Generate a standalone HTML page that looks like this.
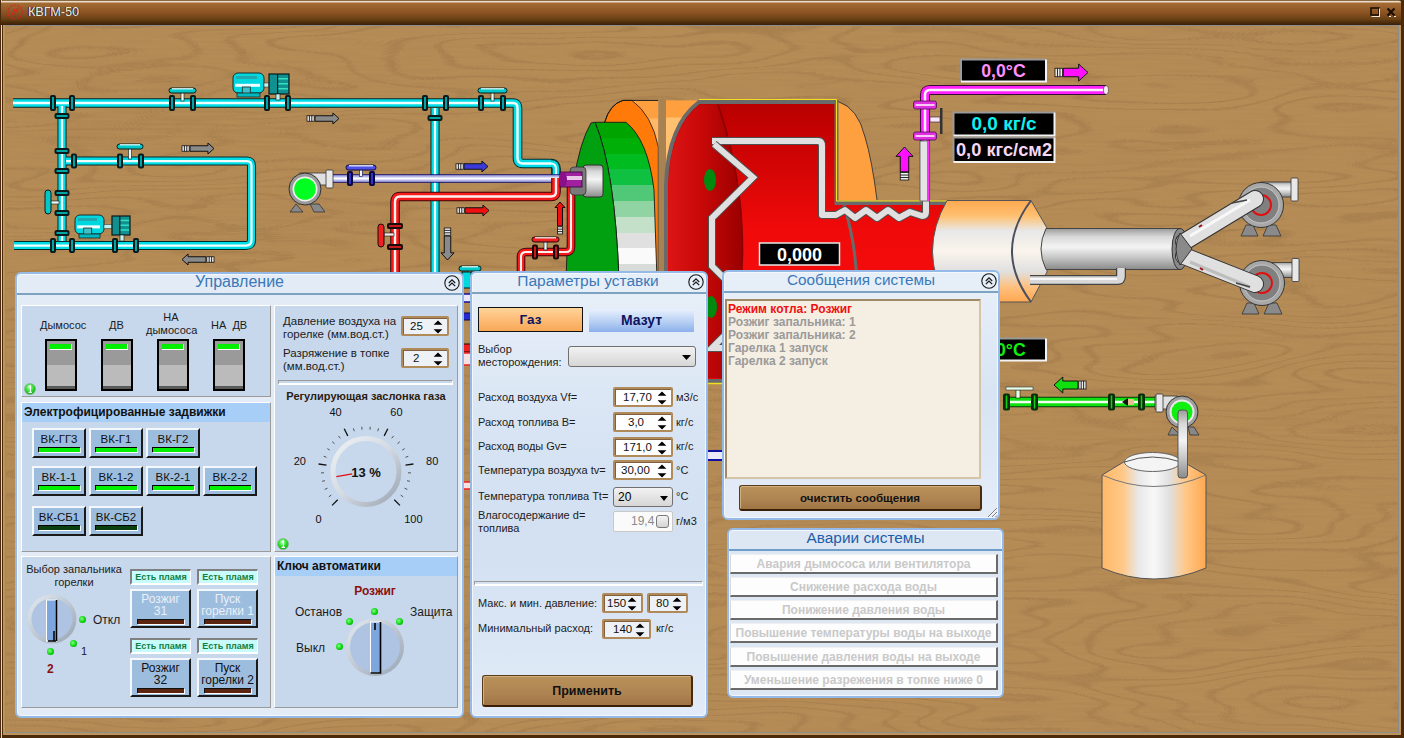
<!DOCTYPE html>
<html><head><meta charset="utf-8">
<style>
*{box-sizing:border-box}
html,body{margin:0;padding:0;width:1404px;height:738px;overflow:hidden;background:#AE8654;font-family:"Liberation Sans",sans-serif}
.a{position:absolute}
#frame{left:0;top:0;width:1404px;height:738px;background:#4A2A0A}
#wood{left:3px;top:25px;width:1398px;height:710px;background:#B48C58}
#content{left:5px;top:25px;width:1394px;height:708px;border:1px solid #8C8C8C;background:#AE8654;overflow:hidden}
#title{left:1px;top:0;width:1400px;height:25px;background:linear-gradient(#8A6A40 0,#8A6A40 1px,#EADCCB 1px,#EADCCB 2px,#A46C34 3px,#8A5222 13px,#6A4216 19px,#4A2A0C 23px,#3A2008 25px);border-radius:3px 3px 0 0}
#title .t{left:27px;top:5px;font-size:12.6px;color:#F4E8C8;text-shadow:-1px 0 #2A1040, 1px 0 #3A6060}
.panel{position:absolute;border:2px solid #96BAE8;border-radius:6px;background:#E3EBF6;box-shadow:inset 0 0 0 1px #F4F8FD}
.ptitle{position:absolute;left:0;right:0;top:1px;text-align:center;font-size:16px;color:#3A78B8;line-height:18px}
.psep{position:absolute;left:1px;right:1px;height:2px;background:#7DA2C2}
.close{position:absolute;width:16px;height:16px}
.sec{position:absolute;background:#C7D7EC;border-top:1px solid #FFFFFF;border-left:1px solid #FFFFFF;border-right:1px solid #9A9A9A;border-bottom:1px solid #9A9A9A}
.hdr{position:absolute;left:0;right:0;top:0;height:19px;background:#A7CEF6;font-weight:bold;font-size:12px;line-height:18px;padding-left:2px;color:#111}
.lbl{position:absolute;font-size:11px;color:#1C1C1C;white-space:nowrap;line-height:13px}
.sw{position:absolute;width:32px;height:52px;background:#000;}
.sw i{position:absolute;left:2px;top:2px;width:28px;height:24px;background:#9A9A9A}
.sw b{position:absolute;left:2px;top:26px;width:28px;height:21px;background:#BBBBBB}
.sw u{position:absolute;left:2px;top:47px;width:28px;height:3px;background:#5A5A5A}
.sw s{position:absolute;left:5px;top:5px;width:21px;height:5px;background:#00F000;border-right:1px solid #fff;border-bottom:1px solid #fff;box-sizing:content-box}
.btn{position:absolute;width:54px;height:30px;background:#9DBDDF;border-top:2px solid #F4F8FC;border-left:2px solid #F4F8FC;border-right:2px solid #1A1A1A;border-bottom:2px solid #1A1A1A;font-size:11.5px;text-align:center;line-height:14px;color:#111;padding-top:2px}
.btn s{position:absolute;left:4px;top:17px;width:41px;height:4px;background:#00F000;border-top:1px solid #000;border-left:1px solid #000;box-shadow:1px 1px 0 #fff;box-sizing:content-box}
.flame{position:absolute;width:61px;height:16px;background:#C8FCFC;border-top:2px solid #808080;border-left:2px solid #808080;border-right:1px solid #fff;border-bottom:2px solid #fff;font-size:9px;font-weight:bold;color:#108040;text-align:center;line-height:12px}
.btn2{position:absolute;width:61px;height:39px;background:#9DBDDF;border-top:2px solid #F4F8FC;border-left:2px solid #F4F8FC;border-right:2px solid #1A1A1A;border-bottom:2px solid #1A1A1A;font-size:12px;text-align:center;line-height:12px;color:#111;padding-top:2px}
.btn2 s{position:absolute;left:5px;top:28px;width:46px;height:4px;background:#5A2410;border-top:1px solid #111;border-left:1px solid #111;box-shadow:1px 1px 0 #fff;box-sizing:content-box}
.spin{position:absolute;height:20px;background:#EEF2F6;border:2px solid #B08A58;border-radius:2px;box-shadow:inset 1px 1px 0 #806040;font-size:11.5px;color:#111;line-height:16px}
.spin svg{transform:scale(1.1)}
.spin .v{position:absolute;top:0}
.spin svg{position:absolute;right:4px;top:2px}
.dd{position:absolute;border:1px solid #707070;border-radius:3px;background:linear-gradient(#F2F2F2,#E4E4E4 50%,#D6D6D6)}
.brown{position:absolute;background:linear-gradient(#B89058,#AE8552 60%,#A07444);border:1px solid #5A3C18;border-bottom:2px solid #3A1E06;border-right:2px solid #4A2A0A;border-radius:3px;box-shadow:inset 1px 1px 0 #D0B080;font-weight:bold;font-size:12px;text-align:center;color:#111}
.msg{position:absolute;font-size:12px;font-weight:bold;line-height:13px;white-space:nowrap}
.alarm{position:absolute;left:730px;width:268px;height:20px;background:#FDFDFD;border-right:2px solid #6A6A6A;border-bottom:2px solid #6A6A6A;border-top:1px solid #F0F0F0;border-left:1px solid #D8D8D8;font-size:12px;font-weight:bold;color:#C9C9C9;text-align:center;line-height:18px;white-space:nowrap}
.dot{position:absolute;width:7px;height:7px;border-radius:50%;background:radial-gradient(circle at 40% 40%,#80FF80,#00D000 60%,#008800)}
</style></head><body>
<div id="frame" class="a"></div>
<div id="wood" class="a"></div><div class="a" style="left:1px;top:0;width:1px;height:738px;background:#E6D6C0"></div><div class="a" style="left:3px;top:25px;width:2px;height:708px;background:#BC945C"></div><div class="a" style="left:1399px;top:25px;width:2px;height:710px;background:#BC945C"></div><div class="a" style="left:3px;top:733px;width:1398px;height:2px;background:#BC945C"></div>
<div id="content" class="a"><svg width="1394" height="708" style="position:absolute;left:0;top:0"><defs><filter id="woodf" x="0" y="0" width="100%" height="100%" color-interpolation-filters="sRGB"><feTurbulence type="fractalNoise" baseFrequency="0.0022 0.014" numOctaves="3" seed="11" result="t"/><feComponentTransfer in="t" result="rings"><feFuncR type="table" tableValues="1 0 0 0 0 0 1 0 0 0 0 0 1 0 0 0 0 0 1 0 0 0 0 0 1 0 0 0 0 0 1 0 0 0 0 0 1 0 0 0 0 0 1 0 0 0 0 0 1 0 0 0 0 0 1 0 0 0 0 0 1 0 0 0 0 0 1 0 0 0 0 0 1"/></feComponentTransfer><feTurbulence type="fractalNoise" baseFrequency="0.02 0.4" numOctaves="1" seed="3" result="fine"/><feComposite in="rings" in2="fine" operator="arithmetic" k1="0" k2="0.6" k3="0.4" k4="0" result="mix"/><feColorMatrix in="mix" type="matrix" values="-0.075 0 0 0 0.72  -0.065 0 0 0 0.556  -0.042 0 0 0 0.342  0 0 0 0 1"/></filter></defs><rect width="1394" height="708" filter="url(#woodf)"/></svg></div>
<div id="title" class="a">
  <svg class="a" style="left:5px;top:3px" width="18" height="18" viewBox="0 0 18 18"><circle cx="9" cy="9" r="7" fill="none" stroke="#E02020" stroke-width="1.2" stroke-dasharray="2 1.5"/><path d="M6 12 L9 6 M9 11 L12 5" stroke="#E02020" stroke-width="1.2"/></svg>
  <div class="a t">КВГМ-50</div>
  <svg class="a" style="left:1369px;top:7px" width="11" height="10"><rect x="1" y="1" width="8" height="7" fill="none" stroke="#1A0E04" stroke-width="1.6"/><path d="M1.5 9.5 H10 M9.5 1.5 V9.5" stroke="#F0E8D8" stroke-width="1"/></svg>
  <svg class="a" style="left:1385px;top:7px" width="11" height="10"><path d="M1.5 1.5 L8.5 8.5 M8.5 1.5 L1.5 8.5" stroke="#1A0E04" stroke-width="2.2"/><path d="M3 9.5 L5 9.5 M8 9.5 L10 9.5" stroke="#F0E8D8" stroke-width="1"/></svg>
</div>

<!-- DIAGRAM -->
<svg id="diag" class="a" style="left:0;top:0" width="1404" height="738" viewBox="0 0 1404 738">
<path d="M13 103 H513 Q517.5 103 517.5 108 V158 Q517.5 163.5 523 163.5 H551 Q556 163.5 556 169 V176" fill="none" stroke="#062a2a" stroke-width="9.6" stroke-linejoin="round"/>
<path d="M13 103 H513 Q517.5 103 517.5 108 V158 Q517.5 163.5 523 163.5 H551 Q556 163.5 556 169 V176" fill="none" stroke="#00DDE6" stroke-width="7.6" stroke-linejoin="round"/>
<path d="M13 103 H513 Q517.5 103 517.5 108 V158 Q517.5 163.5 523 163.5 H551 Q556 163.5 556 169 V176" fill="none" stroke="#F2FFFF" stroke-width="2.4" stroke-linejoin="round"/>
<path d="M62 106 V246" fill="none" stroke="#062a2a" stroke-width="9.1" stroke-linejoin="round"/>
<path d="M62 106 V246" fill="none" stroke="#00DDE6" stroke-width="7.1" stroke-linejoin="round"/>
<path d="M62 106 V246" fill="none" stroke="#F2FFFF" stroke-width="2.25" stroke-linejoin="round"/>
<path d="M66 161 H247 Q251.5 161 251.5 166 V240 Q251.5 245.5 246 245.5 H14" fill="none" stroke="#062a2a" stroke-width="9.1" stroke-linejoin="round"/>
<path d="M66 161 H247 Q251.5 161 251.5 166 V240 Q251.5 245.5 246 245.5 H14" fill="none" stroke="#00DDE6" stroke-width="7.1" stroke-linejoin="round"/>
<path d="M66 161 H247 Q251.5 161 251.5 166 V240 Q251.5 245.5 246 245.5 H14" fill="none" stroke="#F2FFFF" stroke-width="2.25" stroke-linejoin="round"/>
<path d="M435 108 V272" fill="none" stroke="#062a2a" stroke-width="9.1" stroke-linejoin="round"/>
<path d="M435 108 V272" fill="none" stroke="#00DDE6" stroke-width="7.1" stroke-linejoin="round"/>
<path d="M435 108 V272" fill="none" stroke="#F2FFFF" stroke-width="2.25" stroke-linejoin="round"/>
<rect x="50" y="95.0" width="6" height="16" rx="2" fill="#0A1A1A"/>
<rect x="52.2" y="97.0" width="1.6" height="12" fill="#00C8C8"/>
<rect x="69" y="95.0" width="6" height="16" rx="2" fill="#0A1A1A"/>
<rect x="71.2" y="97.0" width="1.6" height="12" fill="#00C8C8"/>
<rect x="169" y="95.0" width="6" height="16" rx="2" fill="#0A1A1A"/>
<rect x="171.2" y="97.0" width="1.6" height="12" fill="#00C8C8"/>
<rect x="190" y="95.0" width="6" height="16" rx="2" fill="#0A1A1A"/>
<rect x="192.2" y="97.0" width="1.6" height="12" fill="#00C8C8"/>
<rect x="264" y="95.0" width="6" height="16" rx="2" fill="#0A1A1A"/>
<rect x="266.2" y="97.0" width="1.6" height="12" fill="#00C8C8"/>
<rect x="285" y="95.0" width="6" height="16" rx="2" fill="#0A1A1A"/>
<rect x="287.2" y="97.0" width="1.6" height="12" fill="#00C8C8"/>
<rect x="422" y="95.0" width="6" height="16" rx="2" fill="#0A1A1A"/>
<rect x="424.2" y="97.0" width="1.6" height="12" fill="#00C8C8"/>
<rect x="443" y="95.0" width="6" height="16" rx="2" fill="#0A1A1A"/>
<rect x="445.2" y="97.0" width="1.6" height="12" fill="#00C8C8"/>
<rect x="478" y="95.0" width="6" height="16" rx="2" fill="#0A1A1A"/>
<rect x="480.2" y="97.0" width="1.6" height="12" fill="#00C8C8"/>
<rect x="500" y="95.0" width="6" height="16" rx="2" fill="#0A1A1A"/>
<rect x="502.2" y="97.0" width="1.6" height="12" fill="#00C8C8"/>
<rect x="181.0" y="91" width="3" height="10" fill="#E8F8F8" stroke="#0A1A1A" stroke-width="0.6"/>
<rect x="169" y="88" width="27" height="5" rx="2.5" fill="#00C8C8" stroke="#0A1A1A" stroke-width="1"/>
<rect x="172" y="88" width="21" height="1.5" fill="#F0FFFF" opacity="0.8"/>
<rect x="491.0" y="91" width="3" height="10" fill="#E8F8F8" stroke="#0A1A1A" stroke-width="0.6"/>
<rect x="478" y="88" width="29" height="5" rx="2.5" fill="#00C8C8" stroke="#0A1A1A" stroke-width="1"/>
<rect x="481" y="88" width="23" height="1.5" fill="#F0FFFF" opacity="0.8"/>
<rect x="54.5" y="113" width="15" height="6" rx="2" fill="#0A1A1A"/>
<rect x="56.5" y="115.2" width="11" height="1.6" fill="#00C8C8"/>
<rect x="427.5" y="115" width="15" height="6" rx="2" fill="#0A1A1A"/>
<rect x="429.5" y="117.2" width="11" height="1.6" fill="#00C8C8"/>
<rect x="54.5" y="148" width="15" height="6" rx="2" fill="#0A1A1A"/>
<rect x="56.5" y="150.2" width="11" height="1.6" fill="#00C8C8"/>
<rect x="54.5" y="168" width="15" height="6" rx="2" fill="#0A1A1A"/>
<rect x="56.5" y="170.2" width="11" height="1.6" fill="#00C8C8"/>
<rect x="54.5" y="190" width="15" height="6" rx="2" fill="#0A1A1A"/>
<rect x="56.5" y="192.2" width="11" height="1.6" fill="#00C8C8"/>
<rect x="54.5" y="210" width="15" height="6" rx="2" fill="#0A1A1A"/>
<rect x="56.5" y="212.2" width="11" height="1.6" fill="#00C8C8"/>
<rect x="54.5" y="230" width="15" height="6" rx="2" fill="#0A1A1A"/>
<rect x="56.5" y="232.2" width="11" height="1.6" fill="#00C8C8"/>
<rect x="47" y="201" width="12" height="3" fill="#E8F8F8" stroke="#0a1a1a" stroke-width="0.6"/>
<rect x="45" y="190" width="6" height="24" rx="3" fill="#00C8C8" stroke="#0a1a1a" stroke-width="1"/>
<rect x="71" y="153.5" width="6" height="15" rx="2" fill="#0A1A1A"/>
<rect x="73.2" y="155.5" width="1.6" height="11" fill="#00C8C8"/>
<rect x="117" y="153.5" width="6" height="15" rx="2" fill="#0A1A1A"/>
<rect x="119.2" y="155.5" width="1.6" height="11" fill="#00C8C8"/>
<rect x="138" y="153.5" width="6" height="15" rx="2" fill="#0A1A1A"/>
<rect x="140.2" y="155.5" width="1.6" height="11" fill="#00C8C8"/>
<rect x="128.5" y="147" width="3" height="12" fill="#E8F8F8" stroke="#0A1A1A" stroke-width="0.6"/>
<rect x="117" y="144" width="26" height="5" rx="2.5" fill="#00C8C8" stroke="#0A1A1A" stroke-width="1"/>
<rect x="120" y="144" width="20" height="1.5" fill="#F0FFFF" opacity="0.8"/>
<rect x="50" y="238.0" width="6" height="15" rx="2" fill="#0A1A1A"/>
<rect x="52.2" y="240.0" width="1.6" height="11" fill="#00C8C8"/>
<rect x="69" y="238.0" width="6" height="15" rx="2" fill="#0A1A1A"/>
<rect x="71.2" y="240.0" width="1.6" height="11" fill="#00C8C8"/>
<rect x="112" y="238.0" width="6" height="15" rx="2" fill="#0A1A1A"/>
<rect x="114.2" y="240.0" width="1.6" height="11" fill="#00C8C8"/>
<rect x="133" y="238.0" width="6" height="15" rx="2" fill="#0A1A1A"/>
<rect x="135.2" y="240.0" width="1.6" height="11" fill="#00C8C8"/>
<rect x="233" y="73" width="31" height="20" rx="5" fill="#00D8E0" stroke="#1a2a2a" stroke-width="1"/>
<rect x="235" y="83.8" width="25" height="3" fill="#F0FFFF"/>
<rect x="236" y="76" width="21" height="3" fill="#20A8B0"/>
<rect x="242.3" y="87" width="8" height="9" fill="#40C0C8" stroke="#1a2a2a" stroke-width="0.8"/>
<rect x="237" y="93" width="23" height="4" fill="#00B8C0" stroke="#1a2a2a" stroke-width="0.8"/>
<rect x="264" y="83.0" width="5" height="4" fill="#C0F0F0" stroke="#1a2a2a" stroke-width="0.5"/>
<rect x="269" y="74" width="20" height="20" fill="#109090" stroke="#0a1a1a" stroke-width="1.2"/>
<rect x="278.0" y="78.0" width="10.0" height="1.5" fill="#30E0C0"/>
<rect x="278.0" y="83.0" width="10.0" height="1.5" fill="#30E0C0"/>
<rect x="278.0" y="88.0" width="10.0" height="1.5" fill="#30E0C0"/>
<rect x="277.0" y="74" width="1.2" height="20" fill="#0a1a1a"/>
<rect x="276" y="94" width="4" height="6" fill="#C0F0F0" stroke="#0a1a1a" stroke-width="0.6"/>
<rect x="75" y="215" width="29" height="19" rx="5" fill="#00D8E0" stroke="#1a2a2a" stroke-width="1"/>
<rect x="77" y="225.35" width="23" height="3" fill="#F0FFFF"/>
<rect x="78" y="218" width="19" height="3" fill="#20A8B0"/>
<rect x="83.7" y="228" width="8" height="9" fill="#40C0C8" stroke="#1a2a2a" stroke-width="0.8"/>
<rect x="79" y="234" width="21" height="4" fill="#00B8C0" stroke="#1a2a2a" stroke-width="0.8"/>
<rect x="104" y="224.5" width="8" height="4" fill="#C0F0F0" stroke="#1a2a2a" stroke-width="0.5"/>
<rect x="112" y="216" width="18" height="19" fill="#109090" stroke="#0a1a1a" stroke-width="1.2"/>
<rect x="120.1" y="219.75" width="9.0" height="1.5" fill="#30E0C0"/>
<rect x="120.1" y="224.5" width="9.0" height="1.5" fill="#30E0C0"/>
<rect x="120.1" y="229.25" width="9.0" height="1.5" fill="#30E0C0"/>
<rect x="119.2" y="216" width="1.2" height="19" fill="#0a1a1a"/>
<rect x="120" y="235" width="4" height="6" fill="#C0F0F0" stroke="#0a1a1a" stroke-width="0.6"/>
<rect x="468.5" y="269" width="3" height="5" fill="#E8F8F8" stroke="#0A1A1A" stroke-width="0.6"/>
<rect x="459" y="266" width="22" height="5" rx="2.5" fill="#00C8C8" stroke="#0A1A1A" stroke-width="1"/>
<rect x="462" y="266" width="16" height="1.5" fill="#F0FFFF" opacity="0.8"/>
<path d="M315.0 115.75 H332.95 V113 L339 118.5 L332.95 124 V121.25 H315.0 Z" fill="#8A8A8A" stroke="#111" stroke-width="1"/><rect x="307" y="115.75" width="7.2" height="5.5" fill="#EEE" stroke="#111" stroke-width="0.8"/><path d="M309.4 115.75 V121.25 M311.8 115.75 V121.25" stroke="#111" stroke-width="0.9"/>
<path d="M190.0 145.75 H207.95 V143 L214 148.5 L207.95 154 V151.25 H190.0 Z" fill="#8A8A8A" stroke="#111" stroke-width="1"/><rect x="182" y="145.75" width="7.2" height="5.5" fill="#EEE" stroke="#111" stroke-width="0.8"/><path d="M184.4 145.75 V151.25 M186.8 145.75 V151.25" stroke="#111" stroke-width="0.9"/>
<path d="M206.0 256.75 H188.05 V254 L182 259.5 L188.05 265 V262.25 H206.0 Z" fill="#8A8A8A" stroke="#111" stroke-width="1"/><rect x="206.8" y="256.75" width="7.2" height="5.5" fill="#EEE" stroke="#111" stroke-width="0.8"/><path d="M211.6 256.75 V262.25 M209.2 256.75 V262.25" stroke="#111" stroke-width="0.9"/>
<path d="M444.25 236.0 V252.85 H441 L447.5 260 L454 252.85 H450.75 V236.0 Z" fill="#8A8A8A" stroke="#111" stroke-width="1"/><rect x="444.25" y="228" width="6.5" height="7.2" fill="#EEE" stroke="#111" stroke-width="0.8"/><path d="M444.25 230.4 H450.75 M444.25 232.8 H450.75" stroke="#111" stroke-width="0.9"/>
<path d="M464.0 163.75 H481.95 V161 L488 166.5 L481.95 172 V169.25 H464.0 Z" fill="#3A3ADA" stroke="#111" stroke-width="1"/><rect x="456" y="163.75" width="7.2" height="5.5" fill="#EEE" stroke="#111" stroke-width="0.8"/><path d="M458.4 163.75 V169.25 M460.8 163.75 V169.25" stroke="#111" stroke-width="0.9"/>
<path d="M465.0 207.75 H482.95 V205 L489 210.5 L482.95 216 V213.25 H465.0 Z" fill="#F01010" stroke="#111" stroke-width="1"/><rect x="457" y="207.75" width="7.2" height="5.5" fill="#EEE" stroke="#111" stroke-width="0.8"/><path d="M459.4 207.75 V213.25 M461.8 207.75 V213.25" stroke="#111" stroke-width="0.9"/>
<path d="M557.5 226.0 V207.5 H555 L560.0 202 L565 207.5 H562.5 V226.0 Z" fill="#F01010" stroke="#111" stroke-width="1"/><rect x="557.5" y="226.8" width="5.0" height="7.2" fill="#EEE" stroke="#111" stroke-width="0.8"/><path d="M557.5 231.6 H562.5 M557.5 229.2 H562.5" stroke="#111" stroke-width="0.9"/>
<path d="M1063.25 68.25 H1078.65 V64 L1088 72.5 L1078.65 81 V76.75 H1063.25 Z" fill="#FF10FF" stroke="#111" stroke-width="1"/><rect x="1055" y="68.25" width="7.425" height="8.5" fill="#EEE" stroke="#111" stroke-width="0.8"/><path d="M1057.475 68.25 V76.75 M1059.95 68.25 V76.75" stroke="#111" stroke-width="0.9"/>
<path d="M900.25 171.75 V156.35 H896 L904.5 147 L913 156.35 H908.75 V171.75 Z" fill="#FF10FF" stroke="#111" stroke-width="1"/><rect x="900.25" y="172.575" width="8.5" height="7.425" fill="#EEE" stroke="#111" stroke-width="0.8"/><path d="M900.25 177.525 H908.75 M900.25 175.05 H908.75" stroke="#111" stroke-width="0.9"/>
<path d="M1078.0 381.0 H1062.8 V377 L1054 385.0 L1062.8 393 V389.0 H1078.0 Z" fill="#10E010" stroke="#111" stroke-width="1"/><rect x="1078.8" y="381.0" width="7.2" height="8.0" fill="#EEE" stroke="#111" stroke-width="0.8"/><path d="M1083.6 381.0 V389.0 M1081.2 381.0 V389.0" stroke="#111" stroke-width="0.9"/>
<path d="M632 100.4 H658.3 V150 Q652 115 632 100.4 Z" fill="#FFB868"/>
<rect x="636" y="100.4" width="22" height="18" fill="#FFA040"/>
<path d="M604.6 122.3 Q610 104 623 100.4 H632 Q652 115 658.3 147 V280 H600 Z" fill="#FF7A08" stroke="#1a1a1a" stroke-width="0.8"/>
<path d="M604.6 122.3 Q610 104 623 100.4 H658.3" fill="none" stroke="#1a1a1a" stroke-width="1"/>
<defs><linearGradient id="gside" gradientUnits="userSpaceOnUse" x1="0" y1="122" x2="0" y2="280"><stop offset="0" stop-color="#00A400"/><stop offset="0.1" stop-color="#00A400"/><stop offset="0.1" stop-color="#00B008"/><stop offset="0.2" stop-color="#00B008"/><stop offset="0.2" stop-color="#00BC20"/><stop offset="0.3" stop-color="#00BC20"/><stop offset="0.3" stop-color="#10C040"/><stop offset="0.4" stop-color="#10C040"/><stop offset="0.4" stop-color="#50C878"/><stop offset="0.5" stop-color="#50C878"/><stop offset="0.5" stop-color="#90D4A4"/><stop offset="0.6" stop-color="#90D4A4"/><stop offset="0.6" stop-color="#C4E0C8"/><stop offset="0.7" stop-color="#C4E0C8"/><stop offset="0.7" stop-color="#E0E0E0"/><stop offset="0.8" stop-color="#E0E0E0"/><stop offset="0.8" stop-color="#FAFAFA"/><stop offset="0.9" stop-color="#FAFAFA"/><stop offset="0.9" stop-color="#D8DCD8"/><stop offset="1" stop-color="#D8DCD8"/></linearGradient></defs>
<path d="M595 122.3 H626 Q648 140 654 190 L657 280 H619 Q615 170 595 122.3 Z" fill="url(#gside)" stroke="#1a1a1a" stroke-width="0.9"/>
<path d="M591 123 Q569 160 566 280 H619 Q615 170 595 122.3 Z" fill="#00A010" stroke="#1a1a1a" stroke-width="0.9"/>
<rect x="658.5" y="99" width="7.5" height="181" fill="#A98252"/>
<defs><linearGradient id="ob" x1="0" y1="0" x2="0" y2="1"><stop offset="0" stop-color="#FFA040"/><stop offset="0.18" stop-color="#FFA040"/><stop offset="0.2" stop-color="#FFC070"/><stop offset="1" stop-color="#FFC070"/></linearGradient></defs>
<rect x="666" y="100.4" width="40" height="90" fill="url(#ob)"/>
<path d="M836 101.4 Q858 108 865 137 Q872 160 877 200 H836 Z" fill="#FFA040"/>
<path d="M838 101.4 Q858 108 865 137 Q872 160 877 200" fill="none" stroke="#333" stroke-width="0.9"/>
<defs><linearGradient id="redv" x1="0" y1="0" x2="0" y2="1"><stop offset="0" stop-color="#B80000"/><stop offset="0.2" stop-color="#D00404"/><stop offset="0.45" stop-color="#F00A0A"/><stop offset="1" stop-color="#FF1010"/></linearGradient><linearGradient id="redh" x1="0" y1="0" x2="1" y2="0"><stop offset="0" stop-color="#DC1414"/><stop offset="0.45" stop-color="#C80808"/><stop offset="1" stop-color="#9A0000"/></linearGradient></defs>
<path d="M699 102 H836.5 V203 H947 V383 H699 Q668 362 666 300 V185 Q668 125 699 102 Z" fill="url(#redv)"/>
<path d="M947 203 H836.5 V102 H699 Q668 125 666 185 V300 Q668 362 699 381 H947" fill="none" stroke="#6A6A6A" stroke-width="4"/>
<path d="M701 383.5 H947" fill="none" stroke="#F0E020" stroke-width="1.5"/>
<path d="M699 99.5 H836.5 V201 H947" fill="none" stroke="#F0E020" stroke-width="1"/>
<path d="M700 104.5 Q670 127 668.5 186 V299 Q670 360 700 378.5 H722 Q765 242 718 104.5 Z" fill="url(#redh)"/>
<path d="M718 104.5 Q765 242 722 378.5" fill="none" stroke="#8A0000" stroke-width="1.5"/>
<path d="M844 205 Q870 290 844 378" fill="none" stroke="#6A6A6A" stroke-width="3"/>
<ellipse cx="710" cy="180" rx="6" ry="11" fill="#008A10"/>
<ellipse cx="711" cy="307" rx="6" ry="11" fill="#008A10"/>
<path d="M712 141 H818 Q822 141 822 146 V215 H836 L845 210 L855 218 L866 210 L877 218 L888 210 L899 218 L910 212 L922 216 Q926 216 926 212 V195" fill="none" stroke="#505050" stroke-width="8" stroke-linejoin="round"/>
<path d="M712 141 H818 Q822 141 822 146 V215 H836 L845 210 L855 218 L866 210 L877 218 L888 210 L899 218 L910 212 L922 216 Q926 216 926 212 V195" fill="none" stroke="#E0E0E0" stroke-width="6" stroke-linejoin="round"/>
<path d="M714 144 L753 177.5 L712 218 V266 L753 307 L712 348 H760" fill="none" stroke="#505050" stroke-width="8" stroke-linejoin="miter"/>
<path d="M714 144 L753 177.5 L712 218 V266 L753 307 L712 348 H760" fill="none" stroke="#E0E0E0" stroke-width="6" stroke-linejoin="miter"/>
<rect x="704" y="451" width="22" height="9" fill="#E8E8F8" stroke="#1010A0" stroke-width="2"/>
<rect x="462" y="272" width="9" height="16" fill="#00D8E0" stroke="#0a1a1a" stroke-width="1"/>
<rect x="462" y="294" width="9" height="8" fill="#E8E8F8" stroke="#1010A0" stroke-width="1.5"/>
<rect x="462" y="313" width="9" height="7" fill="#2828D0" stroke="#0a0a40" stroke-width="1"/>
<rect x="462" y="344" width="9" height="8" fill="#F02020" stroke="#1a0a0a" stroke-width="1"/>
<rect x="462" y="353" width="9" height="12" fill="#F8E0E0" stroke="#F02020" stroke-width="1.5"/>
<rect x="462" y="482" width="9" height="7" fill="#F8E0E0" stroke="#F02020" stroke-width="1.5"/>
<rect x="759.5" y="243" width="80" height="22" fill="#000" stroke="#E8E8E8" stroke-width="1.5"/>
<text x="799.5" y="260.5" text-anchor="middle" font-family="Liberation Sans" font-weight="bold" font-size="18" fill="#FFF">0,000</text>
<defs><linearGradient id="cyl" x1="0" y1="0" x2="0" y2="1"><stop offset="0" stop-color="#FFA850"/><stop offset="0.15" stop-color="#FFC070"/><stop offset="0.3" stop-color="#E8E8E8"/><stop offset="0.5" stop-color="#FAF4EC"/><stop offset="0.7" stop-color="#E0E0E0"/><stop offset="0.85" stop-color="#FFC080"/><stop offset="1" stop-color="#FFA850"/></linearGradient></defs>
<path d="M947 200.5 H1031 L1047 228 V272 L1031 302 H947 Q918 251 947 200.5 Z" fill="url(#cyl)" stroke="#555" stroke-width="1"/>
<path d="M1031 200.5 Q993 251 1031 302" fill="none" stroke="#4A5060" stroke-width="2"/>
<defs><linearGradient id="gp" x1="0" y1="0" x2="0" y2="1"><stop offset="0" stop-color="#9A9A9A"/><stop offset="0.2" stop-color="#D8D8D8"/><stop offset="0.45" stop-color="#F4F4F4"/><stop offset="0.7" stop-color="#C8C8C8"/><stop offset="1" stop-color="#8A8A8A"/></linearGradient></defs>
<path d="M1046 228.5 H1180 V269.5 H1046 Q1036 249 1046 228.5 Z" fill="url(#gp)" stroke="#444" stroke-width="1"/>
<path d="M1030 280 H1118 Q1121 280 1121 276 V268" fill="none" stroke="#444" stroke-width="10"/>
<path d="M1030 280 H1118 Q1121 280 1121 276 V268" fill="none" stroke="#D8D8D8" stroke-width="7.5"/>
<path d="M1030 279 H1117" fill="none" stroke="#F8F8F8" stroke-width="2"/>
<ellipse cx="1180" cy="249" rx="8" ry="20.5" fill="#8A8A8A" stroke="#333" stroke-width="1"/>
<rect x="1261" y="182.0" width="34" height="15" fill="url(#gp)" stroke="#333" stroke-width="0.8"/>
<rect x="1291" y="178.0" width="7" height="23" rx="1" fill="#E8E8E8" stroke="#333" stroke-width="0.8"/>
<path d="M1241 236 H1258 L1253 225 H1246 Z M1263 236 H1281 L1276 225 H1268 Z" fill="#8A8A8A" stroke="#333" stroke-width="0.8"/>
<circle cx="1261" cy="205" r="22.5" fill="#A8A8A8" stroke="#333" stroke-width="1"/>
<circle cx="1261" cy="205" r="18" fill="#808080" stroke="#C8C8C8" stroke-width="1"/>
<circle cx="1261" cy="205" r="10" fill="none" stroke="#E01010" stroke-width="2"/>
<rect x="1262" y="262.5" width="34" height="15" fill="url(#gp)" stroke="#333" stroke-width="0.8"/>
<rect x="1292" y="258.5" width="7" height="23" rx="1" fill="#E8E8E8" stroke="#333" stroke-width="0.8"/>
<path d="M1242 314 H1259 L1254 303 H1247 Z M1264 314 H1282 L1277 303 H1269 Z" fill="#8A8A8A" stroke="#333" stroke-width="0.8"/>
<circle cx="1262" cy="283" r="22.5" fill="#A8A8A8" stroke="#333" stroke-width="1"/>
<circle cx="1262" cy="283" r="18" fill="#808080" stroke="#C8C8C8" stroke-width="1"/>
<circle cx="1262" cy="283" r="10" fill="none" stroke="#E01010" stroke-width="2"/>
<path d="M1184 242 L1255 199" fill="none" stroke="#333" stroke-width="18" stroke-linecap="round"/>
<path d="M1184 242 L1255 199" fill="none" stroke="#E0E0E0" stroke-width="16" stroke-linecap="round"/>
<path d="M1184 256 L1255 284" fill="none" stroke="#333" stroke-width="18" stroke-linecap="round"/>
<path d="M1184 256 L1255 284" fill="none" stroke="#E0E0E0" stroke-width="16" stroke-linecap="round"/>
<path d="M1190 236 L1250 200" fill="none" stroke="#F8F8F8" stroke-width="3"/>
<path d="M1190 262 L1250 287" fill="none" stroke="#BEBEBE" stroke-width="3"/>
<path d="M1180 233 Q1172 249 1180 265 L1192 249 Z" fill="#8A8A8A" stroke="#333" stroke-width="1"/>
<path d="M1232 203 L1247 200 M1236 283 L1250 287" stroke="#444" stroke-width="1.5"/>
<path d="M1199 227 l3 -2 M1200 268 l3 2" stroke="#A01010" stroke-width="2"/>
<path d="M332 178.5 H562" fill="none" stroke="#10107A" stroke-width="8.6" stroke-linejoin="round"/>
<path d="M332 178.5 H562" fill="none" stroke="#B8B8E8" stroke-width="6.6" stroke-linejoin="round"/>
<path d="M332 178.5 H562" fill="none" stroke="#FFFFFF" stroke-width="2.1" stroke-linejoin="round"/>
<rect x="347" y="171.0" width="6" height="15" rx="2" fill="#0a0a40"/>
<rect x="349.2" y="173.0" width="1.6" height="11" fill="#4040E0"/>
<rect x="369" y="171.0" width="6" height="15" rx="2" fill="#0a0a40"/>
<rect x="371.2" y="173.0" width="1.6" height="11" fill="#4040E0"/>
<rect x="359.5" y="168" width="3" height="8.5" fill="#E8F8F8" stroke="#0a0a40" stroke-width="0.6"/>
<rect x="346" y="165" width="30" height="5" rx="2.5" fill="#5050E8" stroke="#0a0a40" stroke-width="1"/>
<rect x="349" y="165" width="24" height="1.5" fill="#F0FFFF" opacity="0.8"/>
<path d="M296 204 L290 212 H303 Z M310 204 L314 212 H325 L319 204 Z" fill="#888" stroke="#333" stroke-width="0.8"/>
<rect x="300" y="173" width="28" height="12" fill="#E0E0E0" stroke="#333" stroke-width="0.8"/>
<rect x="326" y="170" width="7" height="18" rx="1" fill="#E8E8E8" stroke="#333" stroke-width="0.8"/>
<circle cx="305" cy="189" r="16" fill="#9A9A9A" stroke="#333" stroke-width="1"/>
<circle cx="305" cy="189" r="12.5" fill="#F0F0F0"/>
<circle cx="305" cy="189" r="10.8" fill="#00FF20"/>
<path d="M556 178 V192 Q556 196.5 551 196.5 H400 Q395 196.5 395 202 V272" fill="none" stroke="#3a0808" stroke-width="9.6" stroke-linejoin="round"/>
<path d="M556 178 V192 Q556 196.5 551 196.5 H400 Q395 196.5 395 202 V272" fill="none" stroke="#F41C1C" stroke-width="7.6" stroke-linejoin="round"/>
<path d="M556 178 V192 Q556 196.5 551 196.5 H400 Q395 196.5 395 202 V272" fill="none" stroke="#FFF0F0" stroke-width="2.4" stroke-linejoin="round"/>
<path d="M571 186 V247 Q571 252 566 252 H526 Q521 252 521 257 V272" fill="none" stroke="#3a0808" stroke-width="8.6" stroke-linejoin="round"/>
<path d="M571 186 V247 Q571 252 566 252 H526 Q521 252 521 257 V272" fill="none" stroke="#F41C1C" stroke-width="6.6" stroke-linejoin="round"/>
<path d="M571 186 V247 Q571 252 566 252 H526 Q521 252 521 257 V272" fill="none" stroke="#FFF0F0" stroke-width="2.1" stroke-linejoin="round"/>
<rect x="387.0" y="223" width="16" height="6" rx="2" fill="#1a0a0a"/>
<rect x="389.0" y="225.2" width="12" height="1.6" fill="#F02020"/>
<rect x="387.0" y="244" width="16" height="6" rx="2" fill="#1a0a0a"/>
<rect x="389.0" y="246.2" width="12" height="1.6" fill="#F02020"/>
<rect x="384" y="233" width="10" height="3" fill="#F8E8E8" stroke="#1a0a0a" stroke-width="0.6"/>
<rect x="378" y="224" width="6" height="23" rx="3" fill="#F02020" stroke="#1a0a0a" stroke-width="1"/>
<rect x="532" y="244.5" width="6" height="15" rx="2" fill="#1a0a0a"/>
<rect x="534.2" y="246.5" width="1.6" height="11" fill="#F02020"/>
<rect x="553" y="244.5" width="6" height="15" rx="2" fill="#1a0a0a"/>
<rect x="555.2" y="246.5" width="1.6" height="11" fill="#F02020"/>
<rect x="544.0" y="240" width="3" height="10" fill="#E8F8F8" stroke="#1a0a0a" stroke-width="0.6"/>
<rect x="532" y="237" width="27" height="5" rx="2.5" fill="#F02020" stroke="#1a0a0a" stroke-width="1"/>
<rect x="535" y="237" width="21" height="1.5" fill="#F0FFFF" opacity="0.8"/>
<path d="M551 163.5 Q556 163.5 556 169 V174" fill="none" stroke="#062a2a" stroke-width="8.6" stroke-linejoin="round"/>
<path d="M551 163.5 Q556 163.5 556 169 V174" fill="none" stroke="#00DDE6" stroke-width="6.6" stroke-linejoin="round"/>
<path d="M551 163.5 Q556 163.5 556 169 V174" fill="none" stroke="#F2FFFF" stroke-width="2.1" stroke-linejoin="round"/>
<rect x="583" y="165" width="20" height="32" rx="3" fill="url(#gp)" stroke="#333" stroke-width="1"/>
<rect x="570" y="167" width="16" height="28" rx="4" fill="#7A7A7A" stroke="#333" stroke-width="0.8"/>
<rect x="560" y="172" width="22" height="15" fill="#A020A0" stroke="#300030" stroke-width="0.8"/>
<rect x="566" y="176" width="16" height="4" fill="#E8C8E8"/>
<ellipse cx="563" cy="179.5" rx="4" ry="7.5" fill="#8A108A"/>
<path d="M925 200 V95 Q925 90 930 90 H1106" fill="none" stroke="#3a083a" stroke-width="10.1" stroke-linejoin="round"/>
<path d="M925 200 V95 Q925 90 930 90 H1106" fill="none" stroke="#FF22FF" stroke-width="8.1" stroke-linejoin="round"/>
<path d="M925 200 V95 Q925 90 930 90 H1106" fill="none" stroke="#FFF0FF" stroke-width="2.55" stroke-linejoin="round"/>
<rect x="920" y="141" width="9" height="60" fill="#E4E4E4" stroke="#555" stroke-width="0.8"/><rect x="927" y="141" width="2.5" height="60" fill="#FF30FF"/>
<ellipse cx="1106" cy="90" rx="2.5" ry="4.3" fill="#F8E8F8" stroke="#333" stroke-width="0.6"/>
<rect x="913.5" y="101" width="23" height="8" rx="2" fill="#E030E0"/>
<rect x="915.5" y="104.2" width="19" height="1.6" fill="#FFF0FF"/>
<rect x="913.5" y="101" width="23" height="8" rx="2" fill="none" stroke="#4a104a" stroke-width="0.8"/>
<rect x="913.5" y="132" width="23" height="8" rx="2" fill="#E030E0"/>
<rect x="915.5" y="135.2" width="19" height="1.6" fill="#FFF0FF"/>
<rect x="913.5" y="132" width="23" height="8" rx="2" fill="none" stroke="#4a104a" stroke-width="0.8"/>
<rect x="930" y="117" width="10" height="5" fill="#F8E8F8" stroke="#3a0a3a" stroke-width="0.6"/>
<rect x="940" y="108" width="2.5" height="26" fill="#333"/>
<rect x="961" y="59.5" width="85" height="22.0" fill="#000"/>
<path d="M961 81.5 V59.5 H1046" fill="none" stroke="#9A9A9A" stroke-width="2"/>
<path d="M961 81.5 H1046 V59.5" fill="none" stroke="#F4F4F4" stroke-width="2"/>
<text x="1003.5" y="76.5" text-anchor="middle" font-family="Liberation Sans" font-weight="bold" font-size="17.7" fill="#FF90FF">0,0°C</text>
<rect x="953.5" y="112.5" width="101.0" height="23.0" fill="#000"/>
<path d="M953.5 135.5 V112.5 H1054.5" fill="none" stroke="#9A9A9A" stroke-width="2"/>
<path d="M953.5 135.5 H1054.5 V112.5" fill="none" stroke="#F4F4F4" stroke-width="2"/>
<text x="1004.0" y="130.0" text-anchor="middle" font-family="Liberation Sans" font-weight="bold" font-size="19" fill="#10F0F0">0,0 кг/с</text>
<rect x="953.5" y="137.5" width="101.0" height="24.5" fill="#000"/>
<path d="M953.5 162 V137.5 H1054.5" fill="none" stroke="#9A9A9A" stroke-width="2"/>
<path d="M953.5 162 H1054.5 V137.5" fill="none" stroke="#F4F4F4" stroke-width="2"/>
<text x="1004.0" y="155.75" text-anchor="middle" font-family="Liberation Sans" font-weight="bold" font-size="18.3" fill="#F4D8F4">0,0 кгс/см2</text>
<rect x="961" y="338.5" width="85" height="22.0" fill="#000"/>
<path d="M961 360.5 V338.5 H1046" fill="none" stroke="#9A9A9A" stroke-width="2"/>
<path d="M961 360.5 H1046 V338.5" fill="none" stroke="#F4F4F4" stroke-width="2"/>
<text x="1003.5" y="355.5" text-anchor="middle" font-family="Liberation Sans" font-weight="bold" font-size="17.7" fill="#10F010">0,0°C</text>
<path d="M1003 402 H1160" fill="none" stroke="#083a08" stroke-width="10.6" stroke-linejoin="round"/>
<path d="M1003 402 H1160" fill="none" stroke="#10E010" stroke-width="8.6" stroke-linejoin="round"/>
<path d="M1003 402 H1160" fill="none" stroke="#F0FFF0" stroke-width="2.6999999999999997" stroke-linejoin="round"/>
<rect x="1003" y="393.5" width="7" height="17" rx="2" fill="#0a2a0a"/>
<rect x="1005.7" y="395.5" width="1.6" height="13" fill="#10D010"/>
<rect x="1031" y="393.5" width="7" height="17" rx="2" fill="#0a2a0a"/>
<rect x="1033.7" y="395.5" width="1.6" height="13" fill="#10D010"/>
<rect x="1108" y="393.5" width="7" height="17" rx="2" fill="#0a2a0a"/>
<rect x="1110.7" y="395.5" width="1.6" height="13" fill="#10D010"/>
<rect x="1138" y="393.5" width="7" height="17" rx="2" fill="#0a2a0a"/>
<rect x="1140.7" y="395.5" width="1.6" height="13" fill="#10D010"/>
<rect x="1016" y="390" width="4" height="8" fill="#E8FFE8" stroke="#0a2a0a" stroke-width="0.6"/>
<rect x="1006" y="387" width="27" height="3" fill="#E8FFE8" stroke="#333" stroke-width="0.6"/>
<path d="M1122 402 L1128 398 V406 Z" fill="#111"/><rect x="1128" y="399" width="6" height="6" fill="#E8C090"/>
<rect x="1155" y="396" width="22" height="13" fill="#E0E0E0" stroke="#333" stroke-width="0.8"/>
<rect x="1156" y="394" width="7" height="18" rx="1" fill="#E8E8E8" stroke="#333" stroke-width="0.8"/>
<path d="M1172 427 L1168 435 H1180 Z M1188 427 L1190 435 H1199 L1194 427 Z" fill="#888" stroke="#333" stroke-width="0.8"/>
<circle cx="1182" cy="412" r="16" fill="#A0A0A0" stroke="#333" stroke-width="1"/>
<circle cx="1182" cy="412" r="12.5" fill="#E8E8E8"/>
<circle cx="1182" cy="412" r="10.5" fill="#10F010"/>
<defs><linearGradient id="tank" x1="0" y1="0" x2="1" y2="0"><stop offset="0" stop-color="#FFB868"/><stop offset="0.2" stop-color="#FFC888"/><stop offset="0.35" stop-color="#E8E8E8"/><stop offset="0.5" stop-color="#F8F8F8"/><stop offset="0.65" stop-color="#E0E0E0"/><stop offset="0.8" stop-color="#FFC888"/><stop offset="1" stop-color="#FFA850"/></linearGradient></defs>
<path d="M1102 475 L1127 460 H1180 L1206 475 V568 Q1154 590 1102 568 Z" fill="url(#tank)" stroke="#555" stroke-width="1"/>
<path d="M1102 475 Q1154 498 1206 475" fill="none" stroke="#777" stroke-width="1"/>
<ellipse cx="1152.5" cy="462" rx="28" ry="9.5" fill="#F4F4F4" stroke="#666" stroke-width="1"/>
<path d="M1124.5 462 Q1152 452 1181 462" fill="none" stroke="#555" stroke-width="1"/>
<rect x="1178" y="410" width="9.5" height="68" rx="3" fill="url(#gp)" stroke="#444" stroke-width="0.8"/>
</svg>

<!-- PANEL 1: Управление -->
<div class="panel" style="left:15px;top:272px;width:449px;height:446px"></div>
<div class="ptitle a" style="left:15px;width:449px;top:273px">Управление</div>
<div class="psep a" style="left:17px;width:445px;top:293px"></div>
<svg class="close" style="left:444px;top:275px" viewBox="0 0 16 16"><circle cx="8" cy="8" r="7.2" fill="none" stroke="#151515" stroke-width="1.1"/><path d="M4.8 8 L8 4.8 L11.2 8 M4.8 11.2 L8 8 L11.2 11.2" fill="none" stroke="#151515" stroke-width="1.2"/></svg>

<div class="sec" style="left:21px;top:305px;width:250px;height:92px"></div>
<div class="lbl" style="left:40px;top:319px">Дымосос</div>
<div class="lbl" style="left:109px;top:319px">ДВ</div>
<div class="lbl" style="left:161px;top:311px;text-align:center;width:20px">НА</div>
<div class="lbl" style="left:146px;top:324px">дымососа</div>
<div class="lbl" style="left:211px;top:319px">НА&nbsp;&nbsp;ДВ</div>
<div class="sw" style="left:45px;top:339px"><i></i><b></b><u></u><s></s></div>
<div class="sw" style="left:101px;top:339px"><i></i><b></b><u></u><s></s></div>
<div class="sw" style="left:157px;top:339px"><i></i><b></b><u></u><s></s></div>
<div class="sw" style="left:213px;top:339px"><i></i><b></b><u></u><s></s></div>
<svg class="a" style="left:24px;top:383px" width="12" height="12" viewBox="0 0 12 12"><defs><radialGradient id="ledg24" cx="0.45" cy="0.35" r="0.7"><stop offset="0" stop-color="#B8FFB8"/><stop offset="0.5" stop-color="#30E030"/><stop offset="1" stop-color="#10A010"/></radialGradient></defs><circle cx="6" cy="6" r="5.5" fill="url(#ledg24)" stroke="#88B088" stroke-width="0.6"/><path d="M4.6 3.8 L6.4 2.8 V9.4 M4.6 9.4 H8" stroke="#FFFFFF" stroke-width="1.1" fill="none"/></svg>

<div class="sec" style="left:21px;top:402px;width:250px;height:150px"><div class="hdr">Электрофицированные задвижки</div></div>
<div class="btn" style="left:32px;top:428px">ВК-ГГ3<s></s></div>
<div class="btn" style="left:89px;top:428px">ВК-Г1<s></s></div>
<div class="btn" style="left:146px;top:428px">ВК-Г2<s></s></div>
<div class="btn" style="left:32px;top:466px">ВК-1-1<s></s></div>
<div class="btn" style="left:89px;top:466px">ВК-1-2<s></s></div>
<div class="btn" style="left:146px;top:466px">ВК-2-1<s></s></div>
<div class="btn" style="left:203px;top:466px">ВК-2-2<s></s></div>
<div class="btn" style="left:32px;top:506px">ВК-СБ1<s style="background:#0A4010"></s></div>
<div class="btn" style="left:89px;top:506px">ВК-СБ2<s style="background:#0A4010"></s></div>

<div class="sec" style="left:21px;top:556px;width:250px;height:152px"></div>
<div class="lbl" style="left:26px;top:563px;width:96px;text-align:center">Выбор запальника<br>горелки</div>
<svg class="a" style="left:26px;top:593px" width="52" height="52" viewBox="0 0 52 52">
 <defs><linearGradient id="kr" x1="0" y1="0" x2="1" y2="1"><stop offset="0" stop-color="#E6ECF2"/><stop offset="1" stop-color="#98A4B4"/></linearGradient></defs>
 <circle cx="26" cy="26" r="24.5" fill="url(#kr)"/><circle cx="26" cy="26" r="20.5" fill="#AEC4E2"/>
 <rect x="20.5" y="7" width="10" height="41" fill="#7EA6DE" stroke="#fff" stroke-width="1"/><path d="M30.5 7 V48 M28 48 V38 M22 48 H30" stroke="#000" stroke-width="1.5" fill="none"/>
</svg>
<div class="dot" style="left:79px;top:616px"></div>
<div class="dot" style="left:70px;top:640px"></div>
<div class="dot" style="left:47px;top:648px"></div>
<div class="lbl" style="left:93px;top:614px;font-size:12px">Откл</div>
<div class="lbl" style="left:81px;top:645px">1</div>
<div class="lbl" style="left:47px;top:663px;font-weight:bold;color:#8A1010;font-size:12px">2</div>
<div class="flame" style="left:130px;top:569px">Есть пламя</div>
<div class="flame" style="left:197px;top:569px">Есть пламя</div>
<div class="flame" style="left:130px;top:638px">Есть пламя</div>
<div class="flame" style="left:197px;top:638px">Есть пламя</div>
<div class="btn2" style="left:130px;top:589px;color:#E8F0F8">Розжиг<br>31<s></s></div>
<div class="btn2" style="left:197px;top:589px;color:#E8F0F8">Пуск<br>горелки 1<s></s></div>
<div class="btn2" style="left:130px;top:658px">Розжиг<br>32<s></s></div>
<div class="btn2" style="left:197px;top:658px">Пуск<br>горелки 2<s></s></div>

<div class="sec" style="left:274px;top:305px;width:184px;height:247px"></div>
<div class="lbl" style="left:283px;top:315px;font-size:11.5px;line-height:13px">Давление воздуха на<br>горелке (мм.вод.ст.)</div>
<div class="lbl" style="left:283px;top:347px;font-size:11.5px;line-height:13px">Разряжение в топке<br>(мм.вод.ст.)</div>
<div class="spin" style="left:401px;top:316px;width:48px"><span class="v" style="left:7px">25</span><svg width="10" height="14"><path d="M1 5 L5 1 L9 5 Z M1 9 L5 13 L9 9 Z" fill="#000"/></svg></div>
<div class="spin" style="left:401px;top:348px;width:48px"><span class="v" style="left:10px">2</span><svg width="10" height="14"><path d="M1 5 L5 1 L9 5 Z M1 9 L5 13 L9 9 Z" fill="#000"/></svg></div>
<div class="a" style="left:278px;top:380px;width:175px;height:5px;border-top:1px solid #9A9A9A;border-left:1px solid #9A9A9A;border-bottom:2px solid #fff;border-right:1px solid #fff"></div>
<div class="lbl" style="left:274px;top:390px;width:184px;text-align:center;font-weight:bold;color:#2A2010">Регулирующая заслонка газа</div>
<svg class="a" style="left:290px;top:400px" width="160" height="135" viewBox="290 400 160 135" id="gauge">
<defs><linearGradient id="gring" x1="0" y1="0" x2="1" y2="1"><stop offset="0" stop-color="#EEF2F6"/><stop offset="0.5" stop-color="#D4DAE2"/><stop offset="1" stop-color="#98A2B0"/></linearGradient></defs>
<circle cx="366" cy="471.5" r="33" fill="none" stroke="url(#gring)" stroke-width="5"/>
<line x1="337.7" y1="499.8" x2="332.1" y2="505.4" stroke="#111" stroke-width="1.3"/>
<line x1="331.3" y1="495.1" x2="328.8" y2="496.8" stroke="#555" stroke-width="1"/>
<line x1="327.5" y1="488.2" x2="324.7" y2="489.4" stroke="#555" stroke-width="1"/>
<line x1="325.0" y1="480.7" x2="322.1" y2="481.3" stroke="#555" stroke-width="1"/>
<line x1="324.0" y1="472.8" x2="321.0" y2="472.9" stroke="#555" stroke-width="1"/>
<line x1="326.5" y1="465.2" x2="318.6" y2="464.0" stroke="#111" stroke-width="1.3"/>
<line x1="326.5" y1="457.3" x2="323.7" y2="456.3" stroke="#555" stroke-width="1"/>
<line x1="329.8" y1="450.1" x2="327.3" y2="448.6" stroke="#555" stroke-width="1"/>
<line x1="334.5" y1="443.7" x2="332.2" y2="441.7" stroke="#555" stroke-width="1"/>
<line x1="340.3" y1="438.3" x2="338.4" y2="435.9" stroke="#555" stroke-width="1"/>
<line x1="347.8" y1="435.9" x2="344.2" y2="428.7" stroke="#111" stroke-width="1.3"/>
<line x1="354.3" y1="431.2" x2="353.4" y2="428.3" stroke="#555" stroke-width="1"/>
<line x1="362.0" y1="429.7" x2="361.8" y2="426.7" stroke="#555" stroke-width="1"/>
<line x1="370.0" y1="429.7" x2="370.2" y2="426.7" stroke="#555" stroke-width="1"/>
<line x1="377.7" y1="431.2" x2="378.6" y2="428.3" stroke="#555" stroke-width="1"/>
<line x1="384.2" y1="435.9" x2="387.8" y2="428.7" stroke="#111" stroke-width="1.3"/>
<line x1="391.7" y1="438.3" x2="393.6" y2="435.9" stroke="#555" stroke-width="1"/>
<line x1="397.5" y1="443.7" x2="399.8" y2="441.7" stroke="#555" stroke-width="1"/>
<line x1="402.2" y1="450.1" x2="404.7" y2="448.6" stroke="#555" stroke-width="1"/>
<line x1="405.5" y1="457.3" x2="408.3" y2="456.3" stroke="#555" stroke-width="1"/>
<line x1="405.5" y1="465.2" x2="413.4" y2="464.0" stroke="#111" stroke-width="1.3"/>
<line x1="408.0" y1="472.8" x2="411.0" y2="472.9" stroke="#555" stroke-width="1"/>
<line x1="407.0" y1="480.7" x2="409.9" y2="481.3" stroke="#555" stroke-width="1"/>
<line x1="404.5" y1="488.2" x2="407.3" y2="489.4" stroke="#555" stroke-width="1"/>
<line x1="400.7" y1="495.1" x2="403.2" y2="496.8" stroke="#555" stroke-width="1"/>
<line x1="394.3" y1="499.8" x2="399.9" y2="505.4" stroke="#111" stroke-width="1.3"/>
<text x="318.6" y="522.9" text-anchor="middle" font-family="Liberation Sans" font-size="11" fill="#111">0</text>
<text x="299.8" y="465.0" text-anchor="middle" font-family="Liberation Sans" font-size="11" fill="#111">20</text>
<text x="335.6" y="415.8" text-anchor="middle" font-family="Liberation Sans" font-size="11" fill="#111">40</text>
<text x="396.4" y="415.8" text-anchor="middle" font-family="Liberation Sans" font-size="11" fill="#111">60</text>
<text x="432.2" y="465.0" text-anchor="middle" font-family="Liberation Sans" font-size="11" fill="#111">80</text>
<text x="413.4" y="522.9" text-anchor="middle" font-family="Liberation Sans" font-size="11" fill="#111">100</text>
<line x1="352.2" y1="473.9" x2="336.4" y2="476.7" stroke="#E01010" stroke-width="1.2"/>
<text x="366" y="476.5" text-anchor="middle" font-family="Liberation Sans" font-weight="bold" font-size="13" fill="#111">13 %</text>
</svg>
<svg class="a" style="left:277px;top:538px" width="12" height="12" viewBox="0 0 12 12"><defs><radialGradient id="ledg277" cx="0.45" cy="0.35" r="0.7"><stop offset="0" stop-color="#B8FFB8"/><stop offset="0.5" stop-color="#30E030"/><stop offset="1" stop-color="#10A010"/></radialGradient></defs><circle cx="6" cy="6" r="5.5" fill="url(#ledg277)" stroke="#88B088" stroke-width="0.6"/><path d="M4.6 3.8 L6.4 2.8 V9.4 M4.6 9.4 H8" stroke="#FFFFFF" stroke-width="1.1" fill="none"/></svg>

<div class="sec" style="left:274px;top:556px;width:184px;height:152px"><div class="hdr">Ключ автоматики</div></div>
<div class="lbl" style="left:335px;top:585px;width:80px;text-align:center;font-weight:bold;color:#8A1010;font-size:12px">Розжиг</div>
<div class="lbl" style="left:295px;top:606px;font-size:12px">Останов</div>
<div class="lbl" style="left:410px;top:606px;font-size:12px">Защита</div>
<div class="lbl" style="left:296px;top:642px;font-size:12px">Выкл</div>
<div class="dot" style="left:371px;top:608px"></div>
<div class="dot" style="left:346px;top:618px"></div>
<div class="dot" style="left:396px;top:618px"></div>
<div class="dot" style="left:336px;top:643px"></div>
<svg class="a" style="left:345px;top:617px" width="60" height="60" viewBox="0 0 60 60">
 <defs><linearGradient id="kr2" x1="0" y1="0" x2="1" y2="1"><stop offset="0" stop-color="#E6ECF2"/><stop offset="1" stop-color="#98A4B4"/></linearGradient></defs>
 <circle cx="30" cy="30" r="29" fill="url(#kr2)"/><circle cx="30" cy="30" r="25" fill="#AEC4E2"/>
 <rect x="25.5" y="5" width="10" height="51" fill="#7EA6DE" stroke="#fff" stroke-width="1"/><path d="M35.5 5 V56 H25.5 M30 6 V13" stroke="#000" stroke-width="1.6" fill="none"/>
</svg>

<!-- PANEL 2: Параметры уставки -->
<div class="panel" style="left:470px;top:271px;width:238px;height:447px;background:linear-gradient(#E6EEF8 0,#E6EEF8 25px,#D6E3F3 40%,#D2E0F2 60%,#E2EBF7 100%)"></div>
<div class="ptitle a" style="left:470px;width:236px;top:272px;font-size:15.5px">Параметры уставки</div>
<div class="psep a" style="left:472px;width:234px;top:292px"></div>
<svg class="close" style="left:688px;top:274px" viewBox="0 0 16 16"><circle cx="8" cy="8" r="7.2" fill="none" stroke="#151515" stroke-width="1.1"/><path d="M4.8 8 L8 4.8 L11.2 8 M4.8 11.2 L8 8 L11.2 11.2" fill="none" stroke="#151515" stroke-width="1.2"/></svg>
<div class="a" style="left:478px;top:307px;width:105px;height:25px;background:linear-gradient(#FFD49A,#FCB870 60%,#F8A858);border:1px solid #111;font-weight:bold;font-size:13.5px;color:#0C1460;text-align:center;line-height:23px">Газ</div>
<div class="a" style="left:589px;top:309px;width:105px;height:23px;background:linear-gradient(#E8F0FC,#B8D0F4 55%,#8CB0EA);font-weight:bold;font-size:14px;color:#0C1460;text-align:center;line-height:23px">Мазут</div>
<div class="lbl" style="left:478px;top:343px">Выбор<br>месторождения:</div>
<div class="dd" style="left:568px;top:346px;width:128px;height:21px"><svg class="a" style="left:113px;top:8px" width="9" height="5"><path d="M0 0 H9 L4.5 5 Z" fill="#000"/></svg></div>

<div class="lbl" style="left:478px;top:391px">Расход воздуха Vf=</div>
<div class="lbl" style="left:478px;top:416px">Расход топлива B=</div>
<div class="lbl" style="left:478px;top:440px">Расход воды Gv=</div>
<div class="lbl" style="left:478px;top:464px">Температура воздуха tv=</div>
<div class="lbl" style="left:478px;top:490px">Температура топлива Tt=</div>
<div class="lbl" style="left:478px;top:509px">Влагосодержание d=<br>топлива</div>
<div class="spin" style="left:613px;top:387px;width:60px;background:#FFFFFF"><span class="v" style="left:8px">17,70</span><svg width="10" height="14"><path d="M1 5 L5 1 L9 5 Z M1 9 L5 13 L9 9 Z" fill="#000"/></svg></div>
<div class="spin" style="left:613px;top:412px;width:60px;background:#FFFFFF"><span class="v" style="left:13px">3,0</span><svg width="10" height="14"><path d="M1 5 L5 1 L9 5 Z M1 9 L5 13 L9 9 Z" fill="#000"/></svg></div>
<div class="spin" style="left:613px;top:437px;width:60px;background:#FFFFFF"><span class="v" style="left:8px">171,0</span><svg width="10" height="14"><path d="M1 5 L5 1 L9 5 Z M1 9 L5 13 L9 9 Z" fill="#000"/></svg></div>
<div class="spin" style="left:613px;top:460px;width:60px;background:#FFFFFF"><span class="v" style="left:6px">30,00</span><svg width="10" height="14"><path d="M1 5 L5 1 L9 5 Z M1 9 L5 13 L9 9 Z" fill="#000"/></svg></div>
<div class="dd" style="left:613px;top:487px;width:60px;height:20px;font-size:12px;line-height:18px;padding-left:4px">20<svg class="a" style="left:46px;top:8px" width="8" height="5"><path d="M0 0 H8 L4 5 Z" fill="#000"/></svg></div>
<div class="a" style="left:613px;top:511px;width:60px;height:21px;background:#FAFAFA;border:1px solid #C8C8C8;border-radius:2px;font-size:12px;color:#8A8A8A;line-height:19px;padding-left:17px">19,4<div class="a" style="left:42px;top:3px;width:13px;height:13px;border:1px solid #7A7A7A;border-radius:3px;background:linear-gradient(#F4F4F4,#D4D4D4)"></div></div>
<div class="lbl" style="left:676px;top:391px">м3/с</div>
<div class="lbl" style="left:676px;top:416px">кг/с</div>
<div class="lbl" style="left:676px;top:440px">кг/с</div>
<div class="lbl" style="left:676px;top:464px">°С</div>
<div class="lbl" style="left:676px;top:490px">°С</div>
<div class="lbl" style="left:676px;top:515px">г/м3</div>

<div class="a" style="left:474px;top:581px;width:229px;height:5px;border-top:1px solid #9A9A9A;border-left:1px solid #9A9A9A;border-bottom:2px solid #fff;border-right:1px solid #fff"></div>
<div class="lbl" style="left:478px;top:597px">Макс. и мин. давление:</div>
<div class="lbl" style="left:478px;top:622px">Минимальный расход:</div>
<div class="spin" style="left:602px;top:593px;width:41px"><span class="v" style="left:3px">150</span><svg width="10" height="14"><path d="M1 5 L5 1 L9 5 Z M1 9 L5 13 L9 9 Z" fill="#000"/></svg></div>
<div class="spin" style="left:647px;top:593px;width:41px"><span class="v" style="left:7px">80</span><svg width="10" height="14"><path d="M1 5 L5 1 L9 5 Z M1 9 L5 13 L9 9 Z" fill="#000"/></svg></div>
<div class="spin" style="left:602px;top:619px;width:49px"><span class="v" style="left:9px">140</span><svg width="10" height="14"><path d="M1 5 L5 1 L9 5 Z M1 9 L5 13 L9 9 Z" fill="#000"/></svg></div>
<div class="lbl" style="left:656px;top:622px">кг/с</div>
<div class="brown" style="left:482px;top:675px;width:211px;height:32px;line-height:30px;font-size:12.5px">Применить</div>

<!-- PANEL 3: Сообщения системы -->
<div class="panel" style="left:722px;top:270px;width:278px;height:250px;background:linear-gradient(#E6EEF8 0,#E6EEF8 22px,#D8E4F3 50%,#E4ECF7 100%)"></div>
<div class="ptitle a" style="left:722px;width:278px;top:271px;font-size:15.3px">Сообщения системы</div>
<div class="psep a" style="left:724px;width:274px;top:291px"></div>
<svg class="close" style="left:981px;top:273px" viewBox="0 0 16 16"><circle cx="8" cy="8" r="7.2" fill="none" stroke="#151515" stroke-width="1.1"/><path d="M4.8 8 L8 4.8 L11.2 8 M4.8 11.2 L8 8 L11.2 11.2" fill="none" stroke="#151515" stroke-width="1.2"/></svg>
<div class="a" style="left:725px;top:299px;width:256px;height:180px;background:#F5EEE2;border:2px solid #A08A66;border-right-color:#D4C4A8;border-bottom-color:#D4C4A8"></div>
<div class="msg" style="left:728px;top:303px;color:#F01010">Режим котла: Розжиг</div>
<div class="msg" style="left:728px;top:316px;color:#9A9A9A">Розжиг запальника: 1</div>
<div class="msg" style="left:728px;top:329px;color:#9A9A9A">Розжиг запальника: 2</div>
<div class="msg" style="left:728px;top:342px;color:#9A9A9A">Гарелка 1 запуск</div>
<div class="msg" style="left:728px;top:355px;color:#9A9A9A">Гарелка 2 запуск</div>
<div class="brown" style="left:739px;top:485px;width:243px;height:26px;line-height:24px;font-size:11.5px">очистить сообщения</div>
<svg class="a" style="left:986px;top:506px" width="12" height="12"><path d="M11 2 L2 11 M11 6 L6 11 M11 9.5 L9.5 11" stroke="#7A7A7A" stroke-width="1"/><path d="M11 3 L3 11 M11 7 L7 11" stroke="#fff" stroke-width="1"/></svg>

<!-- PANEL 4: Аварии системы -->
<div class="panel" style="left:727px;top:528px;width:277px;height:170px;background:#DDE7F4"></div>
<div class="ptitle a" style="left:727px;width:277px;top:529px;color:#1E5CA8;font-size:15.4px">Аварии системы</div>
<div class="psep a" style="left:729px;width:273px;top:549px;background:#6E9EC8"></div>
<div class="alarm" style="top:554px">Авария дымососа или вентилятора</div>
<div class="alarm" style="top:577px">Снижение расхода воды</div>
<div class="alarm" style="top:600px">Понижение давления воды</div>
<div class="alarm" style="top:623px">Повышение температуры воды на выходе</div>
<div class="alarm" style="top:647px">Повышение давления воды на выходе</div>
<div class="alarm" style="top:670px">Уменьшение разрежения в топке ниже 0</div>
</body></html>
